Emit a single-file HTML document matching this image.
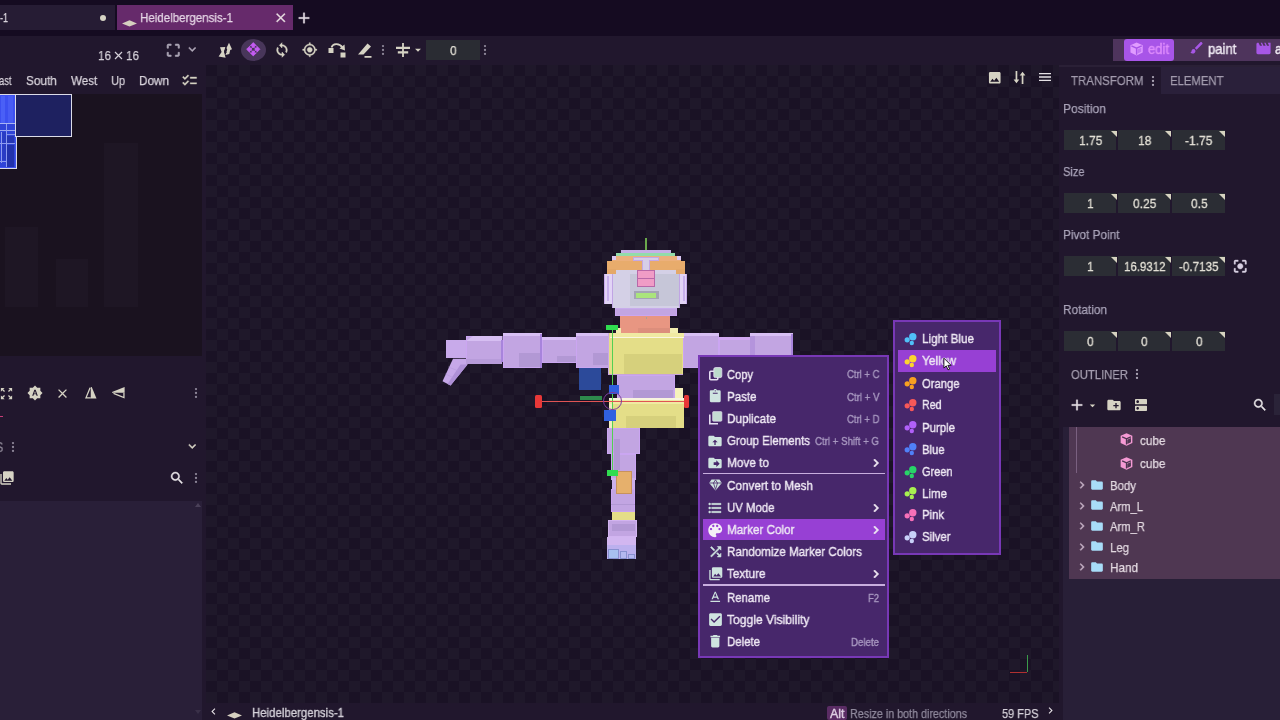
<!DOCTYPE html>
<html>
<head>
<meta charset="utf-8">
<title>Heidelbergensis-1</title>
<style>
*{box-sizing:border-box;margin:0;padding:0}
html,body{width:1280px;height:720px;overflow:hidden;background:#150b21;font-family:"Liberation Sans",sans-serif;color:#d9d4dc;font-size:13px}
.a{position:absolute}
.t{position:absolute;white-space:nowrap;line-height:1;will-change:transform}
svg{position:absolute;overflow:visible}
/* top tab bar */
#tabbar{left:0;top:0;width:1280px;height:36px;background:#150b21}
#tab1{left:0;top:5px;width:115px;height:25px;background:#261c34}
#tab2{left:117px;top:5px;width:176px;height:25px;background:#662a6b}
/* toolbar row */
#toolrow{left:0;top:36px;width:1280px;height:30px;background:#21172d}
/* left panel */
#left{left:0;top:66px;width:203px;height:654px;background:#21172d}
#uv{left:0;top:94px;width:202px;height:262px;background:#1a121f}
#texlist{left:0;top:501px;width:202px;height:219px;background:#291f38}
/* viewport */
#vp{left:206px;top:65px;width:853px;height:638px;background-color:#1a1225;
background-image:conic-gradient(#1f182a 25%,#1a1225 0 50%,#1f182a 0 75%,#1a1225 0);background-size:22px 22px;background-position:0 0}
#lsplit{left:202px;top:65px;width:4px;height:655px;background:#21172d}
#rsplit{left:1059px;top:65px;width:4px;height:2px;background:#2b2138}
#status{left:206px;top:703px;width:853px;height:17px;background:#21172d}
/* right panel */
#right{left:1059px;top:65px;width:221px;height:655px;background:#21172d}
#rtabs{left:1161.2px;top:67.3px;width:119px;height:26.7px;background:#2a203a}
#olist{left:1069px;top:427px;width:211px;height:151.5px;background:#4f3752}
#obelow{left:1063px;top:427px;width:217px;height:293px;background:#281f37}
.num{position:absolute;height:19px;width:53px;background:#2a2c33;color:#e3e0d6;font-size:13px;text-align:center;line-height:19px}
.num:after{content:"";position:absolute;right:0;top:0;border-left:6px solid transparent;border-top:6px solid #dcd9c8}
.lbl{position:absolute;color:#a9a3b8;font-size:13px;line-height:1;white-space:nowrap}
/* menus */
.menu{position:absolute;background:#47266b;border:1px solid #7f3fb5;box-shadow:0 0 0 1px #2c1740}
.mi{position:absolute;left:0;height:22px;width:100%;color:#efe9f4;font-size:13px;line-height:22px;white-space:nowrap}
.mi .k{position:absolute;right:9px;top:0;color:#a898bd;font-size:11px}
.mi .lab{position:absolute;left:28px;top:0}
</style>
</head>
<body>
<div class="a" id="tabbar"></div>
<div class="a" id="tab1"></div>
<div class="a" id="tab2"></div>
<div class="a" id="toolrow"></div>
<div class="a" id="left"></div>
<div class="a" id="uv"></div>
<div class="a" id="texlist"></div>
<div class="a" id="lsplit"></div>
<div class="a" id="vp"></div>
<div class="a" id="rsplit"></div>
<div class="a" id="status"></div>
<div class="a" id="right"></div>
<div class="a" id="rtabs"></div>
<div class="a" id="obelow"></div>
<div class="a" id="olist"></div>
<span class="t" style="left:-0.3px;top:11px;font-size:13.5px;color:#d9d4dc;transform:scaleX(0.667);transform-origin:0 0;-webkit-text-stroke:0.25px #d9d4dc;">-1</span>
<div class="a" style="left:100px;top:15px;width:6px;height:6px;border-radius:50%;background:#d6d3c4"></div>
<svg style="left:122.0px;top:20.0px" width="15" height="7" viewBox="0 0 15 7"><path fill="#d6d0c0" d="M0 3.4 L7.5 0.3 L15 3.4 L7.5 6.6Z"/></svg>
<span class="t" style="left:140.0px;top:11px;font-size:13.5px;color:#e6d6e6;transform:scaleX(0.855);transform-origin:0 0;-webkit-text-stroke:0.25px #e6d6e6;">Heidelbergensis-1</span>
<svg style="left:272.8px;top:10.2px" width="15.5" height="15.5" viewBox="0 0 24 24"><path fill="#e6dce0" stroke="#e6dce0" stroke-width="0.400" transform="" d="M19 6.41L17.59 5 12 10.59 6.41 5 5 6.41 10.59 12 5 17.59 6.41 19 12 13.41 17.59 19 19 17.59 13.41 12z"/></svg>
<svg style="left:295.0px;top:9.0px" width="18" height="18" viewBox="0 0 24 24"><path fill="#e6e0e6" stroke="#e6e0e6" stroke-width="0.400" transform="" d="M19 13h-6v6h-2v-6H5v-2h6V5h2v6h6v2z"/></svg>
<span class="t" style="left:97.5px;top:49px;font-size:13.5px;color:#d4d0d8;transform:scaleX(0.866);transform-origin:0 0;-webkit-text-stroke:0.25px #d4d0d8;">16</span>
<span class="t" style="left:126.0px;top:49px;font-size:13.5px;color:#d4d0d8;transform:scaleX(0.866);transform-origin:0 0;-webkit-text-stroke:0.25px #d4d0d8;">16</span>
<svg style="left:113.5px;top:51.0px" width="9" height="9" viewBox="0 0 9 9"><path d="M1 1 L8 8 M8 1 L1 8" stroke="#d4d0d8" stroke-width="1.200"/></svg>
<svg style="left:164.6px;top:41.8px" width="16.5" height="16.5" viewBox="0 0 24 24"><path fill="#aaa4b4" stroke="#aaa4b4" stroke-width="0.900" transform="" d="M3 5v4h2V5h4V3H5c-1.100 0-2 .9-2 2zm2 10H3v4c0 1.100.9 2 2 2h4v-2H5v-4zm14 4h-4v2h4c1.100 0 2-.9 2-2v-4h-2v4zm0-16h-4v2h4v4h2V5c0-1.100-.9-2-2-2z"/></svg>
<svg style="left:184.8px;top:42.2px" width="14.5" height="14.5" viewBox="0 0 24 24"><path fill="#b0a8b8" stroke="#b0a8b8" stroke-width="0.800" transform="" d="M16.59 8.59L12 13.17 7.41 8.59 6 10l6 6 6-6z"/></svg>
<svg style="left:218.0px;top:42.0px" width="16" height="17" viewBox="0 0 16 17"><path fill="#d6d3c4" d="M2 5.200 L7.300 5 L6 9.800 L7.600 15.800 L0.600 14.400 L3.600 10Z M11 0.700 L14 7.300 L12.200 8 L11.300 12 L7.500 13 L9.200 7.500 L8.500 6Z"/><path d="M6 8.500 L8.500 10.500 M6.500 10.500 L8 11.800" stroke="#21172d" stroke-width="0.900"/></svg>
<div class="a" style="left:241px;top:39px;width:25px;height:22px;border-radius:50%;background:#48365a"></div>
<svg style="left:246.3px;top:42.4px" width="14.5" height="14.5" viewBox="0 0 24 24"><path fill="#c45cf2" stroke="#c45cf2" stroke-width="1.300" stroke-linejoin="round" transform="" d="M10 9h4V6h3l-5-5-5 5h3v3zm-1 1H6V7l-5 5 5 5v-3h3v-4zm14 2l-5-5v3h-3v4h3v3l5-5zm-9 3h-4v3H7l5 5 5-5h-3v-3z"/></svg>
<svg style="left:273.5px;top:41.7px" width="16" height="16" viewBox="0 0 24 24"><path fill="#d6d3c4" stroke="#d6d3c4" stroke-width="0.700" transform="" d="M12 4V1L8 5l4 4V6c3.310 0 6 2.690 6 6 0 1.010-.25 1.970-.7 2.800l1.460 1.460C19.540 15.030 20 13.570 20 12c0-4.420-3.580-8-8-8zm0 14c-3.310 0-6-2.690-6-6 0-1.010.25-1.970.7-2.800L5.240 7.740C4.460 8.970 4 10.430 4 12c0 4.420 3.580 8 8 8v3l4-4-4-4v3z"/></svg>
<svg style="left:301.6px;top:42.0px" width="15.5" height="15.5" viewBox="0 0 24 24"><path fill="#d6d3c4" stroke="#d6d3c4" stroke-width="0.500" transform="" d="M12 8c-2.210 0-4 1.790-4 4s1.790 4 4 4 4-1.790 4-4-1.790-4-4-4zm8.940 3c-.46-4.170-3.770-7.480-7.940-7.940V1h-2v2.060C6.830 3.520 3.520 6.830 3.060 11H1v2h2.060c.46 4.170 3.770 7.480 7.940 7.940V23h2v-2.060c4.170-.46 7.480-3.770 7.940-7.940H23v-2h-2.060zM12 19c-3.870 0-7-3.130-7-7s3.130-7 7-7 7 3.130 7 7-3.130 7-7 7z"/></svg>
<svg style="left:327.5px;top:42.0px" width="19" height="16" viewBox="0 0 19 16"><rect x="0.5" y="6" width="5" height="5" fill="#d6d3c4"/><rect x="12.5" y="10.5" width="5" height="5" fill="#d6d3c4"/><path d="M3.5 5.500 C4.5 1.500 11 0.500 14.500 5.500" fill="none" stroke="#d6d3c4" stroke-width="1.800"/><path fill="#d6d3c4" d="M11.500 6.500 L17 8.500 L16.500 2.500Z"/></svg>
<svg style="left:356.0px;top:42.0px" width="17" height="16" viewBox="0 0 17 16"><path fill="#d6d3c4" d="M2 12.500 L11.500 1.500 L15 4.500 L7.500 12.500Z M8.500 14 H15.500 V15.700 H8.500Z"/></svg>
<svg style="left:381.4px;top:43.5px" width="4" height="12" viewBox="0 0 4 12"><circle cx="2" cy="2.100" r="1.150" fill="#8d8698"/><circle cx="2" cy="6" r="1.150" fill="#8d8698"/><circle cx="2" cy="9.900" r="1.150" fill="#8d8698"/></svg>
<svg style="left:395.5px;top:42.8px" width="14" height="14" viewBox="0 0 14 14"><path fill="#d6d3c4" d="M6.100 0h1.800v14h-1.800z M0 3.800h14v2.200h-14z M1.800 8.200h10.400v2.200h-10.400z"/></svg>
<svg style="left:411.0px;top:43.0px" width="14" height="14" viewBox="0 0 24 24"><path fill="#d6d3c4"  transform="" d="M7 10l5 5 5-5z"/></svg>
<div class="a" style="left:426.0px;top:40.0px;width:53.5px;height:19.5px;background:#2a2c33;"></div>
<span class="t" style="left:449.7px;top:44px;font-size:13.5px;color:#e3e0d6;transform:scaleX(0.890);transform-origin:0 0;-webkit-text-stroke:0.25px #e3e0d6;">0</span>
<svg style="left:482.5px;top:43.5px" width="4" height="12" viewBox="0 0 4 12"><circle cx="2" cy="2.100" r="1.150" fill="#8d8698"/><circle cx="2" cy="6" r="1.150" fill="#8d8698"/><circle cx="2" cy="9.900" r="1.150" fill="#8d8698"/></svg>
<div class="a" style="left:1113.0px;top:39.0px;width:167.0px;height:21.7px;background:#4e345c;"></div>
<div class="a" style="left:1123.6px;top:39.0px;width:50.5px;height:21.7px;background:#a855e8;border-radius:3px"></div>
<svg style="left:1129.8px;top:42.0px" width="13.2" height="14" viewBox="0 0 14 14"><path fill="#e09cff" d="M7 0.200 L13.500 3 V10.800 L7 13.800 L0.500 10.800 V3Z"/><path d="M1.500 3.600 L7 6.200 L12.500 3.600 M7 6.200 V13" stroke="#a855e8" stroke-width="1.500" fill="none"/><path fill="#a855e8" d="M8 7.400 L12 5.600 V10 L8 11.900Z" opacity=".55"/></svg>
<span class="t" style="left:1147.8px;top:42px;font-size:14px;color:#de8cfc;transform:scaleX(0.930);transform-origin:0 0;-webkit-text-stroke:0.4px #de8cfc;">edit</span>
<svg style="left:1189.0px;top:40.2px" width="15.5" height="15.5" viewBox="0 0 24 24"><path fill="#a757e6"  transform="" d="M7 14c-1.660 0-3 1.340-3 3 0 1.310-1.160 2-2 2 .92 1.220 2.490 2 4 2 2.210 0 4-1.790 4-4 0-1.660-1.340-3-3-3zm13.710-9.370l-1.340-1.340c-.39-.39-1.020-.39-1.410 0L9 12.250 11.750 15l8.960-8.960c.39-.39.39-1.020 0-1.410z"/></svg>
<span class="t" style="left:1208.0px;top:42px;font-size:14px;color:#eee8f2;transform:scaleX(0.932);transform-origin:0 0;-webkit-text-stroke:0.4px #eee8f2;">paint</span>
<svg style="left:1254.7px;top:40.0px" width="17" height="17" viewBox="0 0 24 24"><path fill="#a757e6"  transform="" d="M18 4l2 4h-3l-2-4h-2l2 4h-3l-2-4H8l2 4H7L5 4H4c-1.100 0-1.990.9-1.990 2L2 18c0 1.100.9 2 2 2h16c1.100 0 2-.9 2-2V4h-4z"/></svg>
<span class="t" style="left:1275.2px;top:42px;font-size:14px;color:#eee8f2;transform:scaleX(0.890);transform-origin:0 0;-webkit-text-stroke:0.4px #eee8f2;">a</span>
<span class="t" style="left:-1.5px;top:74px;font-size:13px;color:#d9d4dc;transform:scaleX(0.721);transform-origin:0 0;-webkit-text-stroke:0.25px #d9d4dc;">ast</span>
<span class="t" style="left:25.6px;top:74px;font-size:13px;color:#d9d4dc;transform:scaleX(0.904);transform-origin:0 0;-webkit-text-stroke:0.25px #d9d4dc;">South</span>
<span class="t" style="left:70.6px;top:74px;font-size:13px;color:#d9d4dc;transform:scaleX(0.895);transform-origin:0 0;-webkit-text-stroke:0.25px #d9d4dc;">West</span>
<span class="t" style="left:111.0px;top:74px;font-size:13px;color:#d9d4dc;transform:scaleX(0.842);transform-origin:0 0;-webkit-text-stroke:0.25px #d9d4dc;">Up</span>
<span class="t" style="left:139.4px;top:74px;font-size:13px;color:#d9d4dc;transform:scaleX(0.903);transform-origin:0 0;-webkit-text-stroke:0.25px #d9d4dc;">Down</span>
<svg style="left:180.8px;top:72.3px" width="17" height="17" viewBox="0 0 24 24"><path fill="#d6d3c4" stroke="#d6d3c4" stroke-width="0.500" transform="" d="M22 7h-9v2h9V7zm0 8h-9v2h9v-2zM5.540 11L2 7.460l1.410-1.410 2.120 2.120 4.240-4.240 1.410 1.410L5.540 11zm0 8L2 15.460l1.410-1.410 2.120 2.120 4.240-4.240 1.410 1.410L5.540 19z"/></svg>
<div class="a" style="left:0.0px;top:94.0px;width:16.7px;height:75.0px;background:#3f52ee;border:1.500px solid #dcdce8;border-left:none"></div>
<div class="a" style="left:15.2px;top:94.0px;width:57.1px;height:42.6px;background:#1e2160;border:1.500px solid #dcdce8"></div>
<div class="a" style="left:0.0px;top:95.5px;width:15.2px;height:27.0px;background:#3c50f0;"></div>
<div class="a" style="left:1.0px;top:95.5px;width:3.5px;height:27.0px;background:#4a60f6;"></div>
<div class="a" style="left:8.0px;top:95.5px;width:4.5px;height:27.0px;background:#485cf4;"></div>
<div class="a" style="left:0.0px;top:123.7px;width:15.2px;height:43.8px;background:#3044d8;"></div>
<div class="a" style="left:2.0px;top:132.0px;width:3.5px;height:28.0px;background:#2a3cc4;"></div>
<div class="a" style="left:7.4px;top:135.5px;width:6.3px;height:7.0px;background:#2636b4;"></div>
<div class="a" style="left:7.4px;top:144.7px;width:6.3px;height:22.3px;background:#2232ac;"></div>
<div class="a" style="left:0.0px;top:122.5px;width:15.2px;height:1.2px;background:#a8b4f4;"></div>
<div class="a" style="left:0.0px;top:130.0px;width:15.2px;height:1.2px;background:#9aa6f0;"></div>
<div class="a" style="left:6.8px;top:133.8px;width:8.4px;height:1.0px;background:#8090e8;"></div>
<div class="a" style="left:0.0px;top:143.0px;width:15.2px;height:1.0px;background:#8c9af0;"></div>
<div class="a" style="left:5.7px;top:123.7px;width:1.1px;height:43.8px;background:#8c9af0;"></div>
<div class="a" style="left:1.1px;top:131.5px;width:0.8px;height:31.5px;background:#8c9af0;"></div>
<div class="a" style="left:0.0px;top:160.6px;width:5.7px;height:1.0px;background:#8c9af0;"></div>
<div class="a" style="left:5.0px;top:227.0px;width:33.0px;height:80.0px;background:#1e1624;"></div>
<div class="a" style="left:56.0px;top:259.0px;width:31.5px;height:48.0px;background:#1e1624;"></div>
<div class="a" style="left:104.0px;top:143.0px;width:33.5px;height:164.0px;background:#1e1624;"></div>
<svg style="left:-1.0px;top:385.5px" width="15" height="15" viewBox="0 0 24 24"><path fill="#d6d3c4"  transform="" d="M15 3l2.300 2.300-2.890 2.870 1.420 1.420L18.700 6.700 21 9V3zM3 9l2.300-2.300 2.870 2.890 1.420-1.420L6.700 5.300 9 3H3zm6 12l-2.300-2.300 2.890-2.870-1.420-1.420L5.300 17.300 3 15v6zm12-6l-2.300 2.300-2.870-2.890-1.420 1.420 2.890 2.870L15 21h6z"/></svg>
<svg style="left:27.0px;top:385.0px" width="16" height="16" viewBox="0 0 24 24"><path fill="#d6d3c4"  transform="" d="M10.850 12.650h2.300L12 9l-1.150 3.650zM20 8.690V4h-4.690L12 .69 8.690 4H4v4.690L.69 12 4 15.310V20h4.690L12 23.310 15.310 20H20v-4.690L23.310 12 20 8.690zM14.300 16l-.7-2h-3.200l-.7 2H7.800L11 7h2l3.200 9h-1.900z"/></svg>
<svg style="left:55.0px;top:385.5px" width="15" height="15" viewBox="0 0 24 24"><path fill="#d6d3c4"  transform="" d="M19 6.41L17.59 5 12 10.59 6.41 5 5 6.41 10.59 12 5 17.59 6.41 19 12 13.41 17.59 19 19 17.59 13.41 12z"/></svg>
<svg style="left:84.8px;top:387.3px" width="11.5" height="11.5" viewBox="0 0 11.500 11.500"><path fill="#d6d3c4" d="M5.750 0 L6.700 0 L11.500 11.500 L5.750 11.500Z"/><path fill="none" stroke="#d6d3c4" stroke-width="1.300" d="M5.100 0.700 L1 10.850 L5.750 10.850"/></svg>
<svg style="left:112.1px;top:387.3px" width="12.6" height="11.5" viewBox="0 0 12.600 11.500"><path fill="#d6d3c4" d="M12.600 0 L12.600 5.750 L0 5.750 L0 5.100Z"/><path fill="none" stroke="#d6d3c4" stroke-width="1.300" d="M1.500 6.400 L11.950 10.600 L11.950 5.750"/></svg>
<svg style="left:193.7px;top:387.0px" width="4" height="12" viewBox="0 0 4 12"><circle cx="2" cy="2.100" r="1.150" fill="#8d8698"/><circle cx="2" cy="6" r="1.150" fill="#8d8698"/><circle cx="2" cy="9.900" r="1.150" fill="#8d8698"/></svg>
<div class="a" style="left:0.0px;top:415.5px;width:3.0px;height:1.5px;background:#c83c78;"></div>
<span class="t" style="left:-5.5px;top:440px;font-size:14px;color:#8a8494;transform:scaleX(0.890);transform-origin:0 0;-webkit-text-stroke:0.25px #8a8494;">S</span>
<svg style="left:11.0px;top:441.0px" width="4" height="12" viewBox="0 0 4 12"><circle cx="2" cy="2.100" r="1.150" fill="#8d8698"/><circle cx="2" cy="6" r="1.150" fill="#8d8698"/><circle cx="2" cy="9.900" r="1.150" fill="#8d8698"/></svg>
<svg style="left:184.8px;top:438.8px" width="14.5" height="14.5" viewBox="0 0 24 24"><path fill="#d6d3c4" stroke="#d6d3c4" stroke-width="0.800" transform="" d="M16.59 8.59L12 13.17 7.41 8.59 6 10l6 6 6-6z"/></svg>
<svg style="left:-1.5px;top:469.5px" width="16" height="16" viewBox="0 0 24 24"><path fill="#d6d3c4"  transform="" d="M22 16V4c0-1.100-.9-2-2-2H8c-1.100 0-2 .9-2 2v12c0 1.100.9 2 2 2h12c1.100 0 2-.9 2-2zm-11-4l2.030 2.710L16 11l4 5H8l3-4zM2 6v14c0 1.100.9 2 2 2h14v-2H4V6H2z"/></svg>
<svg style="left:169.0px;top:470.0px" width="16" height="16" viewBox="0 0 24 24"><path fill="#e6e2e6" stroke="#e6e2e6" stroke-width="0.600" transform="" d="M15.5 14h-.79l-.28-.27C15.41 12.59 16 11.11 16 9.5 16 5.91 13.09 3 9.5 3S3 5.91 3 9.5 5.91 16 9.5 16c1.61 0 3.09-.59 4.23-1.57l.27.28v.79l5 4.99L20.49 19l-4.99-5zm-6 0C7.01 14 5 11.99 5 9.5S7.01 5 9.5 5 14 7.01 14 9.5 11.99 14 9.5 14z"/></svg>
<svg style="left:193.7px;top:472.0px" width="4" height="12" viewBox="0 0 4 12"><circle cx="2" cy="2.100" r="1.150" fill="#8d8698"/><circle cx="2" cy="6" r="1.150" fill="#8d8698"/><circle cx="2" cy="9.900" r="1.150" fill="#8d8698"/></svg>
<svg style="left:194.5px;top:502.5px" width="6" height="4" viewBox="0 0 6 4"><path fill="#4a4058" d="M0 4 L3 0 L6 4Z"/></svg>
<svg style="left:194.5px;top:710.0px" width="6" height="4" viewBox="0 0 6 4"><path fill="#3a3048" d="M0 0 L3 4 L6 0Z"/></svg>
<svg style="left:986.5px;top:69.7px" width="15.5" height="15.5" viewBox="0 0 24 24"><path fill="#d6d3c4"  transform="" d="M21 19V5c0-1.100-.9-2-2-2H5c-1.100 0-2 .9-2 2v14c0 1.100.9 2 2 2h14c1.100 0 2-.9 2-2zM8.500 13.500l2.500 3.010L14.500 12l4.500 6H5l3.500-4.500z"/></svg>
<svg style="left:1012.8px;top:71.4px" width="13" height="13" viewBox="0 0 13 13"><path fill="#d6d3c4" d="M2.600 0 h1.700 v8.500 h2 L3.450 12.200 L0.600 8.500 h2Z M8.700 13 h1.700 v-8.500 h2 L9.550 0.800 L6.700 4.500 h2Z"/><path fill="#d6d3c4" d="M0.800 2.300h5.300v1.400h-5.300z M6.900 9.300h5.300v1.400h-5.300z" opacity=".0"/></svg>
<svg style="left:1037.0px;top:69.4px" width="16" height="16" viewBox="0 0 24 24"><path fill="#e6e2e6"  transform="" d="M3 18h18v-2H3v2zm0-5h18v-2H3v2zm0-7v2h18V6H3z"/></svg>
<div class="a" style="left:1026.5px;top:655.0px;width:1.2px;height:17.0px;background:#3a9a4a;"></div>
<div class="a" style="left:1010.0px;top:671.5px;width:17.0px;height:1.2px;background:#b03030;"></div>
<span class="t" style="left:1071.2px;top:74px;font-size:13.5px;color:#a39cae;transform:scaleX(0.848);transform-origin:0 0;-webkit-text-stroke:0.25px #a39cae;">TRANSFORM</span>
<svg style="left:1150.5px;top:74.5px" width="4" height="12" viewBox="0 0 4 12"><circle cx="2" cy="2.100" r="1.150" fill="#aaa4b4"/><circle cx="2" cy="6" r="1.150" fill="#aaa4b4"/><circle cx="2" cy="9.900" r="1.150" fill="#aaa4b4"/></svg>
<span class="t" style="left:1169.6px;top:74px;font-size:13.5px;color:#a39cae;transform:scaleX(0.839);transform-origin:0 0;-webkit-text-stroke:0.25px #a39cae;">ELEMENT</span>
<span class="t" style="left:1063.2px;top:102px;font-size:13.5px;color:#a9a3b8;transform:scaleX(0.895);transform-origin:0 0;-webkit-text-stroke:0.25px #a9a3b8;">Position</span>
<div class="a" style="left:1063.7px;top:130.2px;width:52.8px;height:20.3px;background:#2b2d34;"></div>
<div class="a" style="left:1110.7px;top:131px;width:0;height:0;border-left:6px solid transparent;border-top:6px solid #d6d3c0"></div>
<span class="t" style="left:1079.0px;top:134px;font-size:13.5px;color:#e3e0d6;transform:scaleX(0.890);transform-origin:0 0;-webkit-text-stroke:0.3px #e3e0d6;">1.75</span>
<div class="a" style="left:1117.7px;top:130.2px;width:52.8px;height:20.3px;background:#2b2d34;"></div>
<div class="a" style="left:1164.7px;top:131px;width:0;height:0;border-left:6px solid transparent;border-top:6px solid #d6d3c0"></div>
<span class="t" style="left:1138.0px;top:134px;font-size:13.5px;color:#e3e0d6;transform:scaleX(0.890);transform-origin:0 0;-webkit-text-stroke:0.3px #e3e0d6;">18</span>
<div class="a" style="left:1171.9px;top:130.2px;width:52.8px;height:20.3px;background:#2b2d34;"></div>
<div class="a" style="left:1218.9px;top:131px;width:0;height:0;border-left:6px solid transparent;border-top:6px solid #d6d3c0"></div>
<span class="t" style="left:1185.2px;top:134px;font-size:13.5px;color:#e3e0d6;transform:scaleX(0.890);transform-origin:0 0;-webkit-text-stroke:0.3px #e3e0d6;">-1.75</span>
<span class="t" style="left:1063.2px;top:165px;font-size:13.5px;color:#a9a3b8;transform:scaleX(0.819);transform-origin:0 0;-webkit-text-stroke:0.25px #a9a3b8;">Size</span>
<div class="a" style="left:1063.7px;top:193.2px;width:52.8px;height:20.3px;background:#2b2d34;"></div>
<div class="a" style="left:1110.7px;top:194px;width:0;height:0;border-left:6px solid transparent;border-top:6px solid #d6d3c0"></div>
<span class="t" style="left:1087.4px;top:197px;font-size:13.5px;color:#e3e0d6;transform:scaleX(0.890);transform-origin:0 0;-webkit-text-stroke:0.3px #e3e0d6;">1</span>
<div class="a" style="left:1117.7px;top:193.2px;width:52.8px;height:20.3px;background:#2b2d34;"></div>
<div class="a" style="left:1164.7px;top:194px;width:0;height:0;border-left:6px solid transparent;border-top:6px solid #d6d3c0"></div>
<span class="t" style="left:1133.0px;top:197px;font-size:13.5px;color:#e3e0d6;transform:scaleX(0.890);transform-origin:0 0;-webkit-text-stroke:0.3px #e3e0d6;">0.25</span>
<div class="a" style="left:1171.9px;top:193.2px;width:52.8px;height:20.3px;background:#2b2d34;"></div>
<div class="a" style="left:1218.9px;top:194px;width:0;height:0;border-left:6px solid transparent;border-top:6px solid #d6d3c0"></div>
<span class="t" style="left:1190.5px;top:197px;font-size:13.5px;color:#e3e0d6;transform:scaleX(0.890);transform-origin:0 0;-webkit-text-stroke:0.3px #e3e0d6;">0.5</span>
<span class="t" style="left:1063.2px;top:228px;font-size:13.5px;color:#a9a3b8;transform:scaleX(0.876);transform-origin:0 0;-webkit-text-stroke:0.25px #a9a3b8;">Pivot Point</span>
<div class="a" style="left:1063.7px;top:256.2px;width:52.8px;height:20.3px;background:#2b2d34;"></div>
<div class="a" style="left:1110.7px;top:257px;width:0;height:0;border-left:6px solid transparent;border-top:6px solid #d6d3c0"></div>
<span class="t" style="left:1087.4px;top:260px;font-size:13.5px;color:#e3e0d6;transform:scaleX(0.890);transform-origin:0 0;-webkit-text-stroke:0.3px #e3e0d6;">1</span>
<div class="a" style="left:1117.7px;top:256.2px;width:52.8px;height:20.3px;background:#2b2d34;"></div>
<div class="a" style="left:1164.7px;top:257px;width:0;height:0;border-left:6px solid transparent;border-top:6px solid #d6d3c0"></div>
<span class="t" style="left:1124.0px;top:260px;font-size:13.5px;color:#e3e0d6;transform:scaleX(0.851);transform-origin:0 0;-webkit-text-stroke:0.3px #e3e0d6;">16.9312</span>
<div class="a" style="left:1171.9px;top:256.2px;width:52.8px;height:20.3px;background:#2b2d34;"></div>
<div class="a" style="left:1218.9px;top:257px;width:0;height:0;border-left:6px solid transparent;border-top:6px solid #d6d3c0"></div>
<span class="t" style="left:1179.2px;top:260px;font-size:13.5px;color:#e3e0d6;transform:scaleX(0.863);transform-origin:0 0;-webkit-text-stroke:0.3px #e3e0d6;">-0.7135</span>
<svg style="left:1231.7px;top:258.4px" width="16.5" height="16.5" viewBox="0 0 24 24"><path fill="#d8d0e2" stroke="#d8d0e2" stroke-width="0.600" transform="" d="M12 8c-2.210 0-4 1.790-4 4s1.790 4 4 4 4-1.790 4-4-1.790-4-4-4zm-7 7H3v4c0 1.100.9 2 2 2h4v-2H5v-4zM5 5h4V3H5c-1.100 0-2 .9-2 2v4h2V5zm14-2h-4v2h4v4h2V5c0-1.100-.9-2-2-2zm0 16h-4v2h4c1.100 0 2-.9 2-2v-4h-2v4z"/></svg>
<span class="t" style="left:1063.2px;top:303px;font-size:13.5px;color:#a9a3b8;transform:scaleX(0.875);transform-origin:0 0;-webkit-text-stroke:0.25px #a9a3b8;">Rotation</span>
<div class="a" style="left:1063.7px;top:331.2px;width:52.8px;height:20.3px;background:#2b2d34;"></div>
<div class="a" style="left:1110.7px;top:332px;width:0;height:0;border-left:6px solid transparent;border-top:6px solid #d6d3c0"></div>
<span class="t" style="left:1087.4px;top:335px;font-size:13.5px;color:#e3e0d6;transform:scaleX(0.890);transform-origin:0 0;-webkit-text-stroke:0.3px #e3e0d6;">0</span>
<div class="a" style="left:1117.7px;top:331.2px;width:52.8px;height:20.3px;background:#2b2d34;"></div>
<div class="a" style="left:1164.7px;top:332px;width:0;height:0;border-left:6px solid transparent;border-top:6px solid #d6d3c0"></div>
<span class="t" style="left:1141.4px;top:335px;font-size:13.5px;color:#e3e0d6;transform:scaleX(0.890);transform-origin:0 0;-webkit-text-stroke:0.3px #e3e0d6;">0</span>
<div class="a" style="left:1171.9px;top:331.2px;width:52.8px;height:20.3px;background:#2b2d34;"></div>
<div class="a" style="left:1218.9px;top:332px;width:0;height:0;border-left:6px solid transparent;border-top:6px solid #d6d3c0"></div>
<span class="t" style="left:1195.6px;top:335px;font-size:13.5px;color:#e3e0d6;transform:scaleX(0.890);transform-origin:0 0;-webkit-text-stroke:0.3px #e3e0d6;">0</span>
<span class="t" style="left:1071.0px;top:368px;font-size:13.5px;color:#a39cae;transform:scaleX(0.835);transform-origin:0 0;-webkit-text-stroke:0.25px #a39cae;">OUTLINER</span>
<svg style="left:1134.5px;top:368.0px" width="4" height="12" viewBox="0 0 4 12"><circle cx="2" cy="2.100" r="1.150" fill="#aaa4b4"/><circle cx="2" cy="6" r="1.150" fill="#aaa4b4"/><circle cx="2" cy="9.900" r="1.150" fill="#aaa4b4"/></svg>
<svg style="left:1067.5px;top:396.0px" width="18" height="18" viewBox="0 0 24 24"><path fill="#e6e2e6" stroke="#e6e2e6" stroke-width="0.400" transform="" d="M19 13h-6v6h-2v-6H5v-2h6V5h2v6h6v2z"/></svg>
<svg style="left:1085.5px;top:398.5px" width="13" height="13" viewBox="0 0 24 24"><path fill="#d6d3c4"  transform="" d="M7 10l5 5 5-5z"/></svg>
<svg style="left:1105.5px;top:397.0px" width="16" height="16" viewBox="0 0 24 24"><path fill="#d6d3c4"  transform="" d="M20 6h-8l-2-2H4c-1.110 0-1.990.89-1.990 2L2 18c0 1.110.89 2 2 2h16c1.110 0 2-.89 2-2V8c0-1.110-.89-2-2-2zm-1 8h-3v3h-2v-3h-3v-2h3V9h2v3h3v2z"/></svg>
<svg style="left:1133.0px;top:397.0px" width="16" height="16" viewBox="0 0 24 24"><path fill="#d6d3c4"  transform="" d="M20 13H4c-.55 0-1 .45-1 1v6c0 .55.45 1 1 1h16c.55 0 1-.45 1-1v-6c0-.55-.45-1-1-1zM7 19c-1.100 0-2-.9-2-2s.9-2 2-2 2 .9 2 2-.9 2-2 2zM20 3H4c-.55 0-1 .45-1 1v6c0 .55.45 1 1 1h16c.55 0 1-.45 1-1V4c0-.55-.45-1-1-1zM7 9c-1.100 0-2-.9-2-2s.9-2 2-2 2 .9 2 2-.9 2-2 2z"/></svg>
<svg style="left:1252.0px;top:397.0px" width="16" height="16" viewBox="0 0 24 24"><path fill="#e6e2e6" stroke="#e6e2e6" stroke-width="0.600" transform="" d="M15.5 14h-.79l-.28-.27C15.41 12.59 16 11.11 16 9.5 16 5.91 13.09 3 9.5 3S3 5.91 3 9.5 5.91 16 9.5 16c1.61 0 3.09-.59 4.23-1.57l.27.28v.79l5 4.99L20.49 19l-4.99-5zm-6 0C7.01 14 5 11.99 5 9.5S7.01 5 9.5 5 14 7.01 14 9.5 11.99 14 9.5 14z"/></svg>
<div class="a" style="left:1274.0px;top:394.0px;width:6.0px;height:21.0px;background:#2a2338;"></div>
<div class="a" style="left:1075.7px;top:427.0px;width:1.2px;height:45.5px;background:#7a6080;"></div>
<svg style="left:1120.0px;top:433.0px" width="13" height="13" viewBox="0 0 14 14"><path fill="#f59ad4" d="M7 0.300 L13.300 3 V10.800 L7 13.700 L0.700 10.800 V3Z"/><path d="M2.300 4.100 L7 6.200 L11.700 4.100 M7 6.200 V12.300" stroke="#4f3752" stroke-width="1.400" fill="none"/><path fill="#4f3752" d="M7.800 7.200 L11.800 5.400 V9.900 L7.800 11.800Z"/></svg>
<span class="t" style="left:1139.5px;top:434px;font-size:13.5px;color:#e2d8e0;transform:scaleX(0.871);transform-origin:0 0;-webkit-text-stroke:0.25px #e2d8e0;">cube</span>
<svg style="left:1120.0px;top:456.5px" width="13" height="13" viewBox="0 0 14 14"><path fill="#f59ad4" d="M7 0.300 L13.300 3 V10.800 L7 13.700 L0.700 10.800 V3Z"/><path d="M2.300 4.100 L7 6.200 L11.700 4.100 M7 6.200 V12.300" stroke="#4f3752" stroke-width="1.400" fill="none"/><path fill="#4f3752" d="M7.800 7.200 L11.800 5.400 V9.900 L7.800 11.800Z"/></svg>
<span class="t" style="left:1139.5px;top:457px;font-size:13.5px;color:#e2d8e0;transform:scaleX(0.871);transform-origin:0 0;-webkit-text-stroke:0.25px #e2d8e0;">cube</span>
<svg style="left:1075.0px;top:478.2px" width="14" height="14" viewBox="0 0 24 24"><path fill="#c4b0c4" stroke="#c4b0c4" stroke-width="0.800" transform="" d="M10 6L8.59 7.41 13.17 12l-4.58 4.59L10 18l6-6z"/></svg>
<svg style="left:1090.0px;top:477.5px" width="14" height="14" viewBox="0 0 24 24"><path fill="#a8dcf8"  transform="" d="M10 4H4c-1.1 0-1.99.9-1.99 2L2 18c0 1.1.9 2 2 2h16c1.1 0 2-.9 2-2V8c0-1.1-.9-2-2-2h-8l-2-2z"/></svg>
<span class="t" style="left:1110.0px;top:479px;font-size:13.5px;color:#e2d8e0;transform:scaleX(0.845);transform-origin:0 0;-webkit-text-stroke:0.25px #e2d8e0;">Body</span>
<svg style="left:1075.0px;top:498.7px" width="14" height="14" viewBox="0 0 24 24"><path fill="#c4b0c4" stroke="#c4b0c4" stroke-width="0.800" transform="" d="M10 6L8.59 7.41 13.17 12l-4.58 4.59L10 18l6-6z"/></svg>
<svg style="left:1090.0px;top:498.0px" width="14" height="14" viewBox="0 0 24 24"><path fill="#a8dcf8"  transform="" d="M10 4H4c-1.1 0-1.99.9-1.99 2L2 18c0 1.1.9 2 2 2h16c1.1 0 2-.9 2-2V8c0-1.1-.9-2-2-2h-8l-2-2z"/></svg>
<span class="t" style="left:1110.0px;top:500px;font-size:13.5px;color:#e2d8e0;transform:scaleX(0.830);transform-origin:0 0;-webkit-text-stroke:0.25px #e2d8e0;">Arm_L</span>
<svg style="left:1075.0px;top:519.2px" width="14" height="14" viewBox="0 0 24 24"><path fill="#c4b0c4" stroke="#c4b0c4" stroke-width="0.800" transform="" d="M10 6L8.59 7.41 13.17 12l-4.58 4.59L10 18l6-6z"/></svg>
<svg style="left:1090.0px;top:518.5px" width="14" height="14" viewBox="0 0 24 24"><path fill="#a8dcf8"  transform="" d="M10 4H4c-1.1 0-1.99.9-1.99 2L2 18c0 1.1.9 2 2 2h16c1.1 0 2-.9 2-2V8c0-1.1-.9-2-2-2h-8l-2-2z"/></svg>
<span class="t" style="left:1110.0px;top:520px;font-size:13.5px;color:#e2d8e0;transform:scaleX(0.833);transform-origin:0 0;-webkit-text-stroke:0.25px #e2d8e0;">Arm_R</span>
<svg style="left:1075.0px;top:539.7px" width="14" height="14" viewBox="0 0 24 24"><path fill="#c4b0c4" stroke="#c4b0c4" stroke-width="0.800" transform="" d="M10 6L8.59 7.41 13.17 12l-4.58 4.59L10 18l6-6z"/></svg>
<svg style="left:1090.0px;top:539.0px" width="14" height="14" viewBox="0 0 24 24"><path fill="#a8dcf8"  transform="" d="M10 4H4c-1.1 0-1.99.9-1.99 2L2 18c0 1.1.9 2 2 2h16c1.1 0 2-.9 2-2V8c0-1.1-.9-2-2-2h-8l-2-2z"/></svg>
<span class="t" style="left:1110.0px;top:541px;font-size:13.5px;color:#e2d8e0;transform:scaleX(0.844);transform-origin:0 0;-webkit-text-stroke:0.25px #e2d8e0;">Leg</span>
<svg style="left:1075.0px;top:560.2px" width="14" height="14" viewBox="0 0 24 24"><path fill="#c4b0c4" stroke="#c4b0c4" stroke-width="0.800" transform="" d="M10 6L8.59 7.41 13.17 12l-4.58 4.59L10 18l6-6z"/></svg>
<svg style="left:1090.0px;top:559.5px" width="14" height="14" viewBox="0 0 24 24"><path fill="#a8dcf8"  transform="" d="M10 4H4c-1.1 0-1.99.9-1.99 2L2 18c0 1.1.9 2 2 2h16c1.1 0 2-.9 2-2V8c0-1.1-.9-2-2-2h-8l-2-2z"/></svg>
<span class="t" style="left:1110.0px;top:561px;font-size:13.5px;color:#e2d8e0;transform:scaleX(0.868);transform-origin:0 0;-webkit-text-stroke:0.25px #e2d8e0;">Hand</span>
<div class="a" style="left:1059.0px;top:65.0px;width:221.0px;height:2.0px;background:#2a2036;"></div>
<div class="a" style="left:645.0px;top:238.3px;width:1.8px;height:12.2px;background:#6aa84c;"></div>
<div class="a" style="left:620.5px;top:250.0px;width:50.7px;height:3.2px;background:#c6b0e6;"></div>
<div class="a" style="left:616.4px;top:253.0px;width:59.0px;height:3.2px;background:#92dcaa;"></div>
<div class="a" style="left:612.0px;top:256.0px;width:69.0px;height:5.0px;background:#ecb07c;"></div>
<div class="a" style="left:612.0px;top:256.3px;width:4.4px;height:4.2px;background:#dcc8f4;"></div>
<div class="a" style="left:676.8px;top:256.3px;width:4.2px;height:4.2px;background:#dcc8f4;"></div>
<div class="a" style="left:607.4px;top:260.5px;width:77.6px;height:9.5px;background:#e8ac6c;"></div>
<div class="a" style="left:633.0px;top:256.7px;width:26.4px;height:4.3px;background:#d6cee8;border:1px solid #c4a8e4"></div>
<div class="a" style="left:642.0px;top:260.0px;width:8.4px;height:10.0px;background:#d6cee8;border-left:1px solid #c4a8e4;border-right:1px solid #c4a8e4"></div>
<div class="a" style="left:603.9px;top:273.8px;width:8.5px;height:29.8px;background:#e2d4f6;border-left:1.500px solid #c8acec"></div>
<div class="a" style="left:606.5px;top:276.0px;width:2.0px;height:25.0px;background:#c8b0ec;"></div>
<div class="a" style="left:680.2px;top:273.8px;width:7.0px;height:29.8px;background:#e2d4f6;border-right:1.500px solid #c8acec"></div>
<div class="a" style="left:683.0px;top:276.0px;width:2.0px;height:25.0px;background:#c8b0ec;"></div>
<div class="a" style="left:612.2px;top:269.6px;width:68.1px;height:38.2px;background:#d4d0e6;border-left:1.500px solid #c0a4e4;border-right:1.500px solid #c0a4e4"></div>
<div class="a" style="left:629.6px;top:273.8px;width:49.4px;height:31.9px;background:#c6c6d8;"></div>
<div class="a" style="left:637.2px;top:269.6px;width:18.1px;height:17.6px;background:#f09cc6;border:1.200px solid #b868a8"></div>
<div class="a" style="left:637.2px;top:277.8px;width:18.1px;height:1.2px;background:#b868a8;"></div>
<div class="a" style="left:634.2px;top:291.4px;width:24.6px;height:7.4px;background:#a4a4b4;"></div>
<div class="a" style="left:635.8px;top:292.8px;width:20.7px;height:5.2px;background:#aae47c;"></div>
<div class="a" style="left:607.4px;top:269.0px;width:9.0px;height:4.8px;background:#e4a868;"></div>
<div class="a" style="left:676.0px;top:269.0px;width:9.0px;height:4.8px;background:#e4a868;"></div>
<div class="a" style="left:615.0px;top:307.8px;width:62.3px;height:8.4px;background:#c2a5e2;box-shadow:inset 0 0 0 0.8px #cda6f6"></div>
<div class="a" style="left:615.0px;top:307.8px;width:62.3px;height:1.7px;background:#c8acec;"></div>
<div class="a" style="left:620.4px;top:316.2px;width:50.1px;height:17.0px;background:#e89682;"></div>
<div class="a" style="left:638.0px;top:328.0px;width:32.5px;height:5.2px;background:#dc8e7c;"></div>
<div class="a" style="left:645.5px;top:316.5px;width:1.0px;height:2.0px;background:#b0a090;"></div>
<svg style="left:440.0px;top:357.0px" width="30" height="30" viewBox="0 0 30 30"><path fill="#c6a8e8" d="M13 1.700 L26.200 1.700 L27.500 7.400 L10.600 28.600 L2.500 24.200Z"/><path fill="#ae90d6" d="M20.500 7.500 L27.500 7.400 L10.600 28.600 L7.500 27Z"/><path d="M8.500 10 L18.500 14 M5.500 17 L15 21.500" stroke="#b498dc" stroke-width="0.600" fill="none"/></svg>
<div class="a" style="left:445.6px;top:340.0px;width:20.2px;height:18.0px;background:#c8aaea;"></div>
<div class="a" style="left:465.6px;top:336.2px;width:36.4px;height:27.6px;background:#c2a5e2;box-shadow:inset 0 0 0 0.8px #cda6f6"></div>
<svg style="left:465.6px;top:336.2px" width="37" height="6" viewBox="0 0 37 6"><path fill="#d6bef2" d="M0 5 L7 0 L36.500 0 L36.500 5Z"/></svg>
<div class="a" style="left:465.6px;top:358.8px;width:36.4px;height:5.0px;background:#b89cda;"></div>
<div class="a" style="left:500.5px;top:340.0px;width:2.5px;height:22.0px;background:#a884dc;"></div>
<div class="a" style="left:502.5px;top:333.0px;width:39.5px;height:35.2px;background:#c2a5e2;box-shadow:inset 0 0 0 0.8px #cda6f6"></div>
<div class="a" style="left:502.5px;top:333.0px;width:39.5px;height:3.0px;background:#d8c0f4;"></div>
<div class="a" style="left:539.5px;top:334.0px;width:2.5px;height:34.2px;background:#a884dc;"></div>
<div class="a" style="left:519.0px;top:352.5px;width:20.5px;height:14.0px;background:#b298d4;"></div>
<div class="a" style="left:542.0px;top:337.0px;width:34.5px;height:26.2px;background:#c2a5e2;box-shadow:inset 0 0 0 0.8px #cda6f6"></div>
<div class="a" style="left:542.0px;top:337.0px;width:34.5px;height:2.6px;background:#d8c0f4;"></div>
<div class="a" style="left:557.0px;top:356.0px;width:19.0px;height:6.0px;background:#b298d4;"></div>
<div class="a" style="left:576.3px;top:332.5px;width:32.7px;height:35.7px;background:#c2a5e2;box-shadow:inset 0 0 0 0.8px #cda6f6"></div>
<div class="a" style="left:576.3px;top:332.5px;width:32.7px;height:3.0px;background:#d8c0f4;"></div>
<div class="a" style="left:592.5px;top:352.5px;width:15.5px;height:12.0px;background:#b298d4;"></div>
<div class="a" style="left:683.0px;top:333.0px;width:35.7px;height:34.5px;background:#c2a5e2;box-shadow:inset 0 0 0 0.8px #cda6f6"></div>
<div class="a" style="left:683.0px;top:333.0px;width:35.7px;height:3.0px;background:#d8c0f4;"></div>
<div class="a" style="left:718.7px;top:337.0px;width:36.3px;height:23.0px;background:#c2a5e2;box-shadow:inset 0 0 0 0.8px #cda6f6"></div>
<div class="a" style="left:718.7px;top:337.0px;width:36.3px;height:2.8px;background:#d2a8f2;"></div>
<div class="a" style="left:750.4px;top:333.0px;width:42.6px;height:27.0px;background:#c2a5e2;box-shadow:inset 0 0 0 0.8px #cda6f6"></div>
<div class="a" style="left:750.4px;top:333.0px;width:42.6px;height:3.0px;background:#d8c0f4;"></div>
<div class="a" style="left:750.4px;top:336.0px;width:5.1px;height:24.0px;background:#b494dc;"></div>
<div class="a" style="left:790.5px;top:334.0px;width:2.5px;height:26.0px;background:#a884dc;"></div>
<div class="a" style="left:579.0px;top:368.2px;width:22.2px;height:21.8px;background:#2c4a9a;"></div>
<div class="a" style="left:580.0px;top:396.2px;width:22.4px;height:3.6px;background:#2e8a4c;"></div>
<div class="a" style="left:616.9px;top:374.5px;width:57.8px;height:24.5px;background:#c2a5e2;box-shadow:inset 0 0 0 0.8px #cda6f6"></div>
<div class="a" style="left:633.0px;top:390.0px;width:40.0px;height:8.5px;background:#b298d4;"></div>
<div class="a" style="left:674.7px;top:388.4px;width:8.1px;height:10.6px;background:#f6f2bc;"></div>
<div class="a" style="left:615.8px;top:328.0px;width:4.8px;height:5.2px;background:#f2eeb0;"></div>
<div class="a" style="left:670.4px;top:327.5px;width:7.6px;height:5.7px;background:#f2eeb0;"></div>
<div class="a" style="left:608.3px;top:333.0px;width:75.2px;height:42.0px;background:#e4de88;border-left:1.300px solid #caa8e8;border-bottom:1px solid #c8a4d8"></div>
<div class="a" style="left:609.5px;top:333.0px;width:74.0px;height:4.0px;background:#f0eaa2;"></div>
<div class="a" style="left:609.5px;top:336.6px;width:74.0px;height:1.0px;background:#faf6e0;"></div>
<div class="a" style="left:624.0px;top:353.8px;width:57.8px;height:20.2px;background:#d6d07c;"></div>
<div class="a" style="left:609.0px;top:398.0px;width:75.2px;height:30.0px;background:#e4de88;border-left:3px solid #f0ecc0"></div>
<div class="a" style="left:609.0px;top:398.0px;width:75.2px;height:5.5px;background:#f0eaa2;"></div>
<div class="a" style="left:609.0px;top:398.0px;width:75.2px;height:2.3px;background:#f8f4e0;"></div>
<div class="a" style="left:626.0px;top:415.5px;width:50.0px;height:12.0px;background:#d6d07c;"></div>
<div class="a" style="left:607.0px;top:428.0px;width:33.4px;height:26.4px;background:#c2a5e2;box-shadow:inset 0 0 0 0.8px #cda6f6"></div>
<div class="a" style="left:611.2px;top:454.4px;width:24.6px;height:26.0px;background:#c2a5e2;box-shadow:inset 0 0 0 0.8px #cda6f6"></div>
<div class="a" style="left:614.0px;top:438.8px;width:5.6px;height:31.2px;background:#b298d4;"></div>
<div class="a" style="left:612.3px;top:478.3px;width:22.9px;height:10.5px;background:#ccb0ec;"></div>
<div class="a" style="left:611.2px;top:488.8px;width:24.0px;height:22.9px;background:#c2a5e2;box-shadow:inset 0 0 0 0.8px #cda6f6"></div>
<div class="a" style="left:611.2px;top:503.5px;width:24.0px;height:1.7px;background:#b298d4;"></div>
<div class="a" style="left:615.8px;top:471.0px;width:15.9px;height:23.0px;background:#e6b06c;border:1px solid #c8925c"></div>
<div class="a" style="left:612.3px;top:511.7px;width:22.3px;height:10.3px;background:#e4de88;"></div>
<div class="a" style="left:608.0px;top:519.6px;width:28.7px;height:17.1px;background:#c2a5e2;border:1px solid #d2b4f0"></div>
<div class="a" style="left:611.5px;top:524.0px;width:23.0px;height:6.5px;background:#b298d4;"></div>
<div class="a" style="left:607.0px;top:536.7px;width:28.8px;height:8.3px;background:#d2b6f0;"></div>
<div class="a" style="left:606.7px;top:545.0px;width:29.1px;height:14.0px;background:#bcb0ee;"></div>
<div class="a" style="left:607.5px;top:549.0px;width:11.0px;height:9.5px;background:#a8c0f0;border:0.600px solid #8890d0"></div>
<div class="a" style="left:620.0px;top:551.0px;width:7.0px;height:7.5px;background:#b4b8f0;border:0.600px solid #8890d0"></div>
<div class="a" style="left:628.0px;top:554.0px;width:7.0px;height:4.5px;background:#b4b8f0;border:0.600px solid #8890d0"></div>
<div class="a" style="left:611.6px;top:330.0px;width:1.6px;height:141.0px;background:#52d052;"></div>
<div class="a" style="left:606.0px;top:325.0px;width:12.0px;height:5.3px;background:#30dc50;"></div>
<div class="a" style="left:607.0px;top:469.6px;width:11.0px;height:6.7px;background:#30dc50;"></div>
<div class="a" style="left:541.0px;top:400.6px;width:143.0px;height:1.4px;background:#e05454;"></div>
<div class="a" style="left:535.3px;top:395.3px;width:6.4px;height:12.5px;background:#e83838;border-radius:1.500px"></div>
<div class="a" style="left:683.7px;top:394.8px;width:4.9px;height:12.8px;background:#e83838;border-radius:1.500px"></div>
<div class="a" style="left:609.1px;top:384.5px;width:9.6px;height:9.9px;background:#3060e0;"></div>
<div class="a" style="left:604.2px;top:409.7px;width:11.8px;height:10.9px;background:#3060e0;"></div>
<div class="a" style="left:603px;top:391.600px;width:18.800px;height:18.800px;border-radius:50%;border:1px solid #7c3c9c"></div>
<div class="a" style="left:698.3px;top:355.3px;width:190.9px;height:302.9px;background:#47276b;border:2px solid #7838b6"></div>
<div class="a" style="left:703.0px;top:518.8px;width:182.0px;height:21.6px;background:#9740d4;"></div>
<svg style="left:709.0px;top:367.0px" width="13.5" height="13.5" viewBox="0 0 13.500 13.500"><rect x="0.800" y="4.300" width="8" height="8.400" rx="1" fill="#47276b" stroke="#e6def2" stroke-width="1.600"/><rect x="4.800" y="0.600" width="8" height="10" rx="1.600" fill="#bcdacc" stroke="#e6def2" stroke-width="0.800"/></svg>
<span class="t" style="left:727.0px;top:368px;font-size:13.5px;color:#efe9f4;transform:scaleX(0.825);transform-origin:0 0;-webkit-text-stroke:0.4px #efe9f4;">Copy</span>
<span class="t" style="left:846.5px;top:369px;font-size:11.5px;color:#a898c0;transform:scaleX(0.827);transform-origin:0 0;-webkit-text-stroke:0.4px #a898c0;">Ctrl + C</span>
<svg style="left:708.0px;top:388.9px" width="14.5" height="14.5" viewBox="0 0 24 24"><path fill="#cfe4e0"  transform="" d="M19 2h-4.180C14.400.84 13.300 0 12 0c-1.300 0-2.400.84-2.820 2H5c-1.100 0-2 .9-2 2v16c0 1.100.9 2 2 2h14c1.100 0 2-.9 2-2V4c0-1.100-.9-2-2-2zm-7 0c.55 0 1 .45 1 1s-.45 1-1 1-1-.45-1-1 .45-1 1-1zm4 6H8V6h8v2z"/></svg>
<span class="t" style="left:727.0px;top:390px;font-size:13.5px;color:#efe9f4;transform:scaleX(0.855);transform-origin:0 0;-webkit-text-stroke:0.4px #efe9f4;">Paste</span>
<span class="t" style="left:846.5px;top:392px;font-size:11.5px;color:#a898c0;transform:scaleX(0.841);transform-origin:0 0;-webkit-text-stroke:0.4px #a898c0;">Ctrl + V</span>
<svg style="left:709.0px;top:411.3px" width="13.5" height="13.5" viewBox="0 0 13.500 13.500"><path d="M0.800 3.500 V12.700 H9" fill="none" stroke="#e6def2" stroke-width="1.600"/><rect x="3.600" y="0.600" width="9.300" height="9.600" rx="1" fill="#c4dcd2" stroke="#e6def2" stroke-width="0.600"/></svg>
<span class="t" style="left:727.0px;top:412px;font-size:13.5px;color:#efe9f4;transform:scaleX(0.871);transform-origin:0 0;-webkit-text-stroke:0.4px #efe9f4;">Duplicate</span>
<span class="t" style="left:846.5px;top:414px;font-size:11.5px;color:#a898c0;transform:scaleX(0.827);transform-origin:0 0;-webkit-text-stroke:0.4px #a898c0;">Ctrl + D</span>
<svg style="left:707.3px;top:432.5px" width="16" height="16" viewBox="0 0 24 24"><path fill="#cfe4e0"  transform="" d="M20 6h-8l-2-2H4c-1.100 0-2 .9-2 2v12c0 1.100.9 2 2 2h16c1.100 0 2-.9 2-2V8c0-1.100-.9-2-2-2zm-7 8v4h-2v-4H8l4-4 4 4h-3z"/></svg>
<span class="t" style="left:727.0px;top:434px;font-size:13.5px;color:#efe9f4;transform:scaleX(0.851);transform-origin:0 0;-webkit-text-stroke:0.4px #efe9f4;">Group Elements</span>
<span class="t" style="left:815.0px;top:436px;font-size:11.5px;color:#a898c0;transform:scaleX(0.842);transform-origin:0 0;-webkit-text-stroke:0.4px #a898c0;">Ctrl + Shift + G</span>
<svg style="left:707.3px;top:454.5px" width="16" height="16" viewBox="0 0 24 24"><path fill="#cfe4e0"  transform="" d="M20 6h-8l-2-2H4c-1.100 0-2 .9-2 2v12c0 1.100.9 2 2 2h16c1.100 0 2-.9 2-2V8c0-1.100-.9-2-2-2zm-6 12v-3h-4v-4h4V8l5 5-5 5z"/></svg>
<span class="t" style="left:727.0px;top:456px;font-size:13.5px;color:#efe9f4;transform:scaleX(0.875);transform-origin:0 0;-webkit-text-stroke:0.4px #efe9f4;">Move to</span>
<svg style="left:867.8px;top:454.5px" width="16" height="16" viewBox="0 0 24 24"><path fill="#eee6f2" stroke="#eee6f2" stroke-width="1" transform="" d="M10 6L8.59 7.41 13.17 12l-4.58 4.59L10 18l6-6z"/></svg>
<svg style="left:708.5px;top:479.0px" width="13" height="12" viewBox="0 0 13 12"><path fill="#cfe4e0" d="M2.500 0.500 H10.500 L12.800 4 L6.500 11.500 L0.200 4Z"/><path d="M0.500 4 H12.500 M4.500 4 L6.500 0.800 L8.500 4 L6.500 10.500Z" stroke="#47276b" stroke-width="0.800" fill="none"/></svg>
<span class="t" style="left:727.0px;top:479px;font-size:13.5px;color:#efe9f4;transform:scaleX(0.868);transform-origin:0 0;-webkit-text-stroke:0.4px #efe9f4;">Convert to Mesh</span>
<svg style="left:707.3px;top:499.5px" width="16" height="16" viewBox="0 0 24 24"><path fill="#cfe4e0" stroke="#cfe4e0" stroke-width="0.700" transform="" d="M4 10.500c-.83 0-1.500.67-1.500 1.500s.67 1.500 1.500 1.500 1.500-.67 1.500-1.500-.67-1.500-1.500-1.500zm0-6c-.83 0-1.500.67-1.500 1.500S3.170 7.500 4 7.500 5.500 6.830 5.500 6 4.830 4.500 4 4.500zm0 12c-.83 0-1.500.68-1.500 1.500s.68 1.500 1.500 1.500 1.500-.68 1.500-1.500-.67-1.500-1.500-1.500zM7 19h14v-2H7v2zm0-6h14v-2H7v2zm0-8v2h14V5H7z"/></svg>
<span class="t" style="left:727.0px;top:501px;font-size:13.5px;color:#efe9f4;transform:scaleX(0.844);transform-origin:0 0;-webkit-text-stroke:0.4px #efe9f4;">UV Mode</span>
<svg style="left:867.8px;top:499.5px" width="16" height="16" viewBox="0 0 24 24"><path fill="#eee6f2" stroke="#eee6f2" stroke-width="1" transform="" d="M10 6L8.59 7.41 13.17 12l-4.58 4.59L10 18l6-6z"/></svg>
<svg style="left:706.0px;top:521.0px" width="18.5" height="18.5" viewBox="0 0 24 24"><path fill="#f4f0f6"  transform="" d="M12 3c-4.970 0-9 4.030-9 9s4.030 9 9 9c.83 0 1.500-.67 1.500-1.500 0-.39-.15-.74-.39-1.010-.23-.26-.38-.61-.38-.99 0-.83.67-1.500 1.500-1.500H16c2.760 0 5-2.240 5-5 0-4.420-4.030-8-9-8zm-5.500 9c-.83 0-1.500-.67-1.500-1.500S5.670 9 6.500 9 8 9.670 8 10.500 7.330 12 6.500 12zm3-4C8.670 8 8 7.330 8 6.500S8.670 5 9.500 5s1.500.67 1.500 1.500S10.330 8 9.500 8zm5 0c-.83 0-1.500-.67-1.500-1.500S13.670 5 14.500 5s1.500.67 1.500 1.500S15.330 8 14.500 8zm3 4c-.83 0-1.500-.67-1.500-1.500S16.670 9 17.500 9s1.500.67 1.500 1.500-.67 1.500-1.500 1.500z"/></svg>
<span class="t" style="left:727.0px;top:523px;font-size:13.5px;color:#efe9f4;transform:scaleX(0.865);transform-origin:0 0;-webkit-text-stroke:0.4px #efe9f4;">Marker Color</span>
<svg style="left:867.8px;top:521.5px" width="16" height="16" viewBox="0 0 24 24"><path fill="#eee6f2" stroke="#eee6f2" stroke-width="1" transform="" d="M10 6L8.59 7.41 13.17 12l-4.58 4.59L10 18l6-6z"/></svg>
<svg style="left:707.5px;top:543.8px" width="15.5" height="15.5" viewBox="0 0 24 24"><path fill="#cfe4e0" stroke="#cfe4e0" stroke-width="1" transform="" d="M10.590 9.170L5.410 4 4 5.410l5.170 5.170 1.420-1.410zM14.500 4l2.040 2.040L4 18.590 5.410 20 17.960 7.460 20 9.500V4h-5.500zm.33 9.410l-1.410 1.410 3.130 3.130L14.500 20H20v-5.500l-2.040 2.040-3.130-3.130z"/></svg>
<span class="t" style="left:727.0px;top:545px;font-size:13.5px;color:#efe9f4;transform:scaleX(0.861);transform-origin:0 0;-webkit-text-stroke:0.4px #efe9f4;">Randomize Marker Colors</span>
<svg style="left:707.5px;top:565.8px" width="15.6" height="15.6" viewBox="0 0 24 24"><path fill="#cfe4e0"  transform="" d="M22 16V4c0-1.100-.9-2-2-2H8c-1.100 0-2 .9-2 2v12c0 1.100.9 2 2 2h12c1.100 0 2-.9 2-2zm-11-4l2.030 2.710L16 11l4 5H8l3-4zM2 6v14c0 1.100.9 2 2 2h14v-2H4V6H2z"/></svg>
<span class="t" style="left:727.0px;top:567px;font-size:13.5px;color:#efe9f4;transform:scaleX(0.870);transform-origin:0 0;-webkit-text-stroke:0.4px #efe9f4;">Texture</span>
<svg style="left:867.8px;top:565.6px" width="16" height="16" viewBox="0 0 24 24"><path fill="#eee6f2" stroke="#eee6f2" stroke-width="1" transform="" d="M10 6L8.59 7.41 13.17 12l-4.58 4.59L10 18l6-6z"/></svg>
<svg style="left:707.0px;top:589.0px" width="16.5" height="16.5" viewBox="0 0 24 24"><path fill="#cfe4e0"  transform="" d="M5 17v2h14v-2H5zm4.500-4.200h5l.9 2.200h2.100L12.750 4h-1.500L6.500 15h2.100l.9-2.200zM12 5.980L13.870 11h-3.740L12 5.980z"/></svg>
<span class="t" style="left:727.0px;top:591px;font-size:13.5px;color:#efe9f4;transform:scaleX(0.843);transform-origin:0 0;-webkit-text-stroke:0.4px #efe9f4;">Rename</span>
<span class="t" style="left:868.0px;top:593px;font-size:11.5px;color:#a898c0;transform:scaleX(0.820);transform-origin:0 0;-webkit-text-stroke:0.4px #a898c0;">F2</span>
<svg style="left:706.8px;top:610.8px" width="17" height="17" viewBox="0 0 24 24"><path fill="#cfe4e0"  transform="" d="M19 3H5c-1.11 0-2 .9-2 2v14c0 1.1.89 2 2 2h14c1.11 0 2-.9 2-2V5c0-1.1-.89-2-2-2zm-9 14l-5-5 1.410-1.410L10 14.170l7.590-7.590L19 8l-9 9z"/></svg>
<span class="t" style="left:727.0px;top:613px;font-size:13.5px;color:#efe9f4;transform:scaleX(0.896);transform-origin:0 0;-webkit-text-stroke:0.4px #efe9f4;">Toggle Visibility</span>
<svg style="left:707.0px;top:633.0px" width="16.5" height="16.5" viewBox="0 0 24 24"><path fill="#cfe4e0"  transform="" d="M6 19c0 1.1.9 2 2 2h8c1.1 0 2-.9 2-2V7H6v12zM19 4h-3.500l-1-1h-5l-1 1H5v2h14V4z"/></svg>
<span class="t" style="left:727.0px;top:635px;font-size:13.5px;color:#efe9f4;transform:scaleX(0.846);transform-origin:0 0;-webkit-text-stroke:0.4px #efe9f4;">Delete</span>
<span class="t" style="left:851.0px;top:637px;font-size:11.5px;color:#a898c0;transform:scaleX(0.842);transform-origin:0 0;-webkit-text-stroke:0.4px #a898c0;">Delete</span>
<div class="a" style="left:703.0px;top:472.8px;width:182.0px;height:1.6px;background:#c8aede;"></div>
<div class="a" style="left:703.0px;top:584.3px;width:182.0px;height:1.6px;background:#c8aede;"></div>
<div class="a" style="left:892.8px;top:319.8px;width:107.9px;height:235.2px;background:#47276b;border:2px solid #7838b6"></div>
<div class="a" style="left:897.7px;top:349.5px;width:98.0px;height:22.0px;background:#9740d4;"></div>
<svg style="left:903.7px;top:332.2px" width="14" height="14" viewBox="0 0 14 14"><circle cx="8.800" cy="4.800" r="3.700" fill="#50c0f8"/><circle cx="3.200" cy="7.800" r="2.600" fill="#50c0f8"/><circle cx="7.800" cy="11" r="2.200" fill="#50c0f8"/></svg>
<span class="t" style="left:922.0px;top:332px;font-size:13.5px;color:#efe9f4;transform:scaleX(0.866);transform-origin:0 0;-webkit-text-stroke:0.4px #efe9f4;">Light Blue</span>
<svg style="left:903.7px;top:354.1px" width="14" height="14" viewBox="0 0 14 14"><circle cx="8.800" cy="4.800" r="3.700" fill="#fcd430"/><circle cx="3.200" cy="7.800" r="2.600" fill="#fcd430"/><circle cx="7.800" cy="11" r="2.200" fill="#fcd430"/></svg>
<span class="t" style="left:922.0px;top:354px;font-size:13.5px;color:#efe9f4;transform:scaleX(0.882);transform-origin:0 0;-webkit-text-stroke:0.4px #efe9f4;">Yellow</span>
<svg style="left:903.7px;top:376.3px" width="14" height="14" viewBox="0 0 14 14"><circle cx="8.800" cy="4.800" r="3.700" fill="#f8a020"/><circle cx="3.200" cy="7.800" r="2.600" fill="#f8a020"/><circle cx="7.800" cy="11" r="2.200" fill="#f8a020"/></svg>
<span class="t" style="left:922.0px;top:377px;font-size:13.5px;color:#efe9f4;transform:scaleX(0.833);transform-origin:0 0;-webkit-text-stroke:0.4px #efe9f4;">Orange</span>
<svg style="left:903.7px;top:398.1px" width="14" height="14" viewBox="0 0 14 14"><circle cx="8.800" cy="4.800" r="3.700" fill="#f85858"/><circle cx="3.200" cy="7.800" r="2.600" fill="#f85858"/><circle cx="7.800" cy="11" r="2.200" fill="#f85858"/></svg>
<span class="t" style="left:922.0px;top:398px;font-size:13.5px;color:#efe9f4;transform:scaleX(0.787);transform-origin:0 0;-webkit-text-stroke:0.4px #efe9f4;">Red</span>
<svg style="left:903.7px;top:420.3px" width="14" height="14" viewBox="0 0 14 14"><circle cx="8.800" cy="4.800" r="3.700" fill="#b060f8"/><circle cx="3.200" cy="7.800" r="2.600" fill="#b060f8"/><circle cx="7.800" cy="11" r="2.200" fill="#b060f8"/></svg>
<span class="t" style="left:922.0px;top:421px;font-size:13.5px;color:#efe9f4;transform:scaleX(0.846);transform-origin:0 0;-webkit-text-stroke:0.4px #efe9f4;">Purple</span>
<svg style="left:903.7px;top:442.3px" width="14" height="14" viewBox="0 0 14 14"><circle cx="8.800" cy="4.800" r="3.700" fill="#5080f8"/><circle cx="3.200" cy="7.800" r="2.600" fill="#5080f8"/><circle cx="7.800" cy="11" r="2.200" fill="#5080f8"/></svg>
<span class="t" style="left:922.0px;top:443px;font-size:13.5px;color:#efe9f4;transform:scaleX(0.833);transform-origin:0 0;-webkit-text-stroke:0.4px #efe9f4;">Blue</span>
<svg style="left:903.7px;top:464.5px" width="14" height="14" viewBox="0 0 14 14"><circle cx="8.800" cy="4.800" r="3.700" fill="#28d468"/><circle cx="3.200" cy="7.800" r="2.600" fill="#28d468"/><circle cx="7.800" cy="11" r="2.200" fill="#28d468"/></svg>
<span class="t" style="left:922.0px;top:465px;font-size:13.5px;color:#efe9f4;transform:scaleX(0.813);transform-origin:0 0;-webkit-text-stroke:0.4px #efe9f4;">Green</span>
<svg style="left:903.7px;top:486.3px" width="14" height="14" viewBox="0 0 14 14"><circle cx="8.800" cy="4.800" r="3.700" fill="#a8f050"/><circle cx="3.200" cy="7.800" r="2.600" fill="#a8f050"/><circle cx="7.800" cy="11" r="2.200" fill="#a8f050"/></svg>
<span class="t" style="left:922.0px;top:487px;font-size:13.5px;color:#efe9f4;transform:scaleX(0.854);transform-origin:0 0;-webkit-text-stroke:0.4px #efe9f4;">Lime</span>
<svg style="left:903.7px;top:508.2px" width="14" height="14" viewBox="0 0 14 14"><circle cx="8.800" cy="4.800" r="3.700" fill="#f870b8"/><circle cx="3.200" cy="7.800" r="2.600" fill="#f870b8"/><circle cx="7.800" cy="11" r="2.200" fill="#f870b8"/></svg>
<span class="t" style="left:922.0px;top:508px;font-size:13.5px;color:#efe9f4;transform:scaleX(0.838);transform-origin:0 0;-webkit-text-stroke:0.4px #efe9f4;">Pink</span>
<svg style="left:903.7px;top:530.2px" width="14" height="14" viewBox="0 0 14 14"><circle cx="8.800" cy="4.800" r="3.700" fill="#c8d0f8"/><circle cx="3.200" cy="7.800" r="2.600" fill="#c8d0f8"/><circle cx="7.800" cy="11" r="2.200" fill="#c8d0f8"/></svg>
<span class="t" style="left:922.0px;top:530px;font-size:13.5px;color:#efe9f4;transform:scaleX(0.844);transform-origin:0 0;-webkit-text-stroke:0.4px #efe9f4;">Silver</span>
<svg style="left:942.5px;top:356.5px" width="9" height="14" viewBox="0 0 10 15"><path d="M1 1 L1 12 L3.600 9.600 L5.600 14 L7.400 13.200 L5.400 9 L9 9Z" fill="#fff" stroke="#111" stroke-width="1"/></svg>
<svg style="left:207.0px;top:704.5px" width="13" height="13" viewBox="0 0 24 24"><path fill="#e6e2e6"  transform="" d="M15.41 7.41L14 6l-6 6 6 6 1.41-1.41L10.83 12z"/></svg>
<svg style="left:227.0px;top:712.3px" width="15" height="7" viewBox="0 0 15 7"><path fill="#d6d0c0" d="M0 3.400 L7.500 0.300 L15 3.400 L7.500 6.600Z"/></svg>
<span class="t" style="left:252.0px;top:707px;font-size:12.5px;color:#d4d0d8;transform:scaleX(0.913);transform-origin:0 0;-webkit-text-stroke:0.35px #d4d0d8;">Heidelbergensis-1</span>
<div class="a" style="left:827.3px;top:706.2px;width:20.0px;height:14.0px;background:#5a2c64;border-radius:2px"></div>
<span class="t" style="left:830.1px;top:708px;font-size:12.5px;color:#e0d0e4;transform:scaleX(0.994);transform-origin:0 0;-webkit-text-stroke:0.35px #e0d0e4;">Alt</span>
<span class="t" style="left:850.0px;top:708px;font-size:12.5px;color:#8f899c;transform:scaleX(0.859);transform-origin:0 0;-webkit-text-stroke:0.25px #8f899c;">Resize in both directions</span>
<span class="t" style="left:1001.5px;top:707px;font-size:13.5px;color:#d4d0d8;transform:scaleX(0.811);transform-origin:0 0;-webkit-text-stroke:0.25px #d4d0d8;">59 FPS</span>
<svg style="left:1043.5px;top:704.0px" width="13" height="13" viewBox="0 0 24 24"><path fill="#e6e2e6"  transform="" d="M10 6L8.59 7.41 13.17 12l-4.58 4.59L10 18l6-6z"/></svg>
</body>
</html>
